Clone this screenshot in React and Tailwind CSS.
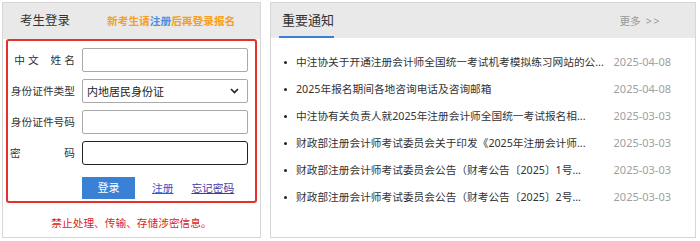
import React from "react";

const font = { fontFamily: '"Noto Sans", "Noto Sans CJK SC", sans-serif' };

const news = [
  ["中注协关于开通注册会计师全国统一考试机考模拟练习网站的公...", "2025-04-08"],
  ["2025年报名期间各地咨询电话及咨询邮箱", "2025-04-08"],
  ["中注协有关负责人就2025年注册会计师全国统一考试报名相...", "2025-03-03"],
  ["财政部注册会计师考试委员会关于印发《2025年注册会计师...", "2025-03-03"],
  ["财政部注册会计师考试委员会公告（财考公告〔2025〕1号...", "2025-03-03"],
  ["财政部注册会计师考试委员会公告（财考公告〔2025〕2号...", "2025-03-03"],
];

function Row({ label, children }) {
  return (
    <div className="flex items-center h-[24px]">
      <div className="w-[67px] flex justify-end text-[10.7px] text-[#333] leading-none">{label}</div>
      <div className="ml-[7px] w-[166px] h-[24px]">{children}</div>
    </div>
  );
}

export default function App() {
  return (
    <div style={font} className="w-[700px] h-[241px] bg-white flex gap-[9px] pl-[2px] pt-[2px]">
      {/* Left panel */}
      <div className="w-[259px] h-[236px] border border-[#d6d6d6] flex flex-col">
        <div className="h-[36px] bg-[#e9e9e9] flex items-center pl-[17px]">
          <span className="text-[12.5px] text-[#333]">考生登录</span>
          <span className="ml-[37px] text-[10.7px] font-bold text-[#f5a020]">
            新考生请<span className="text-[#4a90e2]">注册</span>后再登录报名
          </span>
        </div>
        <div className="mx-[3px] border-2 border-[#e8302a] rounded-[3px] pt-[7px] pb-[2px] flex flex-col">
          <div className="flex flex-col gap-[7px]">
            <Row
              label={
                <>
                  <span className="mr-[3px]">中</span>
                  <span className="mr-[12px]">文</span>
                  <span className="mr-[3px]">姓</span>
                  <span>名</span>
                </>
              }
            >
              <div className="w-full h-full border border-[#a9a9a9] rounded-[2px] bg-white" />
            </Row>
            <Row label={<span>身份证件类型</span>}>
              <div className="w-full h-full border border-[#a9a9a9] rounded-[2px] bg-white flex items-center pl-[4px] pr-[8px]">
                <span className="flex-1 text-[11px] text-[#222] leading-none">内地居民身份证</span>
                <svg width="9" height="6" viewBox="0 0 9 6">
                  <path d="M1 1 L4.5 4.5 L8 1" fill="none" stroke="#222" strokeWidth="1.6" />
                </svg>
              </div>
            </Row>
            <Row label={<span>身份证件号码</span>}>
              <div className="w-full h-full border border-[#a9a9a9] rounded-[2px] bg-white" />
            </Row>
            <Row
              label={
                <div className="w-[65px] flex justify-between">
                  <span>密</span>
                  <span>码</span>
                </div>
              }
            >
              <div className="w-full h-full border-[1.5px] border-[#222] rounded-[3px] bg-white" />
            </Row>
          </div>
          <div className="flex items-center mt-[12px] pl-[74px] h-[22px]">
            <div className="w-[53px] h-[22px] bg-[#3a80d5] text-white text-[11px] flex items-center justify-center">
              登录
            </div>
            <span className="ml-[17px] text-[10.7px] text-[#2a5bd0] underline">注册</span>
            <span className="ml-[18px] text-[10.7px] text-[#3a3aa8] underline">忘记密码</span>
          </div>
        </div>
        <div className="mt-[13px] text-center text-[10.7px] leading-[14px] text-[#d9251c]">
          禁止处理、传输、存储涉密信息。
        </div>
      </div>

      {/* Right panel */}
      <div className="w-[426px] h-[236px] border border-[#d6d6d6] flex flex-col">
        <div className="h-[35px] bg-[#e9e9e9] flex items-stretch pl-[8px] pr-[34px]">
          <div className="flex items-center pl-[3px] border-b-2 border-[#3a80d5]">
            <span className="text-[13px] text-[#333] pt-[2px]">重要通知</span>
          </div>
          <div className="flex-1" />
          <div className="flex items-center text-[10.7px] text-[#999] pt-[1px]">
            <span>更多</span>
            <span className="ml-[5px] tracking-[1.5px]">&gt;&gt;</span>
          </div>
        </div>
        <div className="pt-[11px] pl-[13px] pr-[24px] flex flex-col">
          {news.map(([t, d], i) => (
            <div key={i} className="h-[27px] flex items-center">
              <span className="w-[3px] h-[3px] rounded-full bg-[#222]" />
              <span className="ml-[9px] flex-1 text-[10.7px] text-[#333] whitespace-nowrap overflow-hidden">{t}</span>
              <span className="text-[11px] text-[#a0a0a0]">{d}</span>
            </div>
          ))}
        </div>
      </div>
    </div>
  );
}
